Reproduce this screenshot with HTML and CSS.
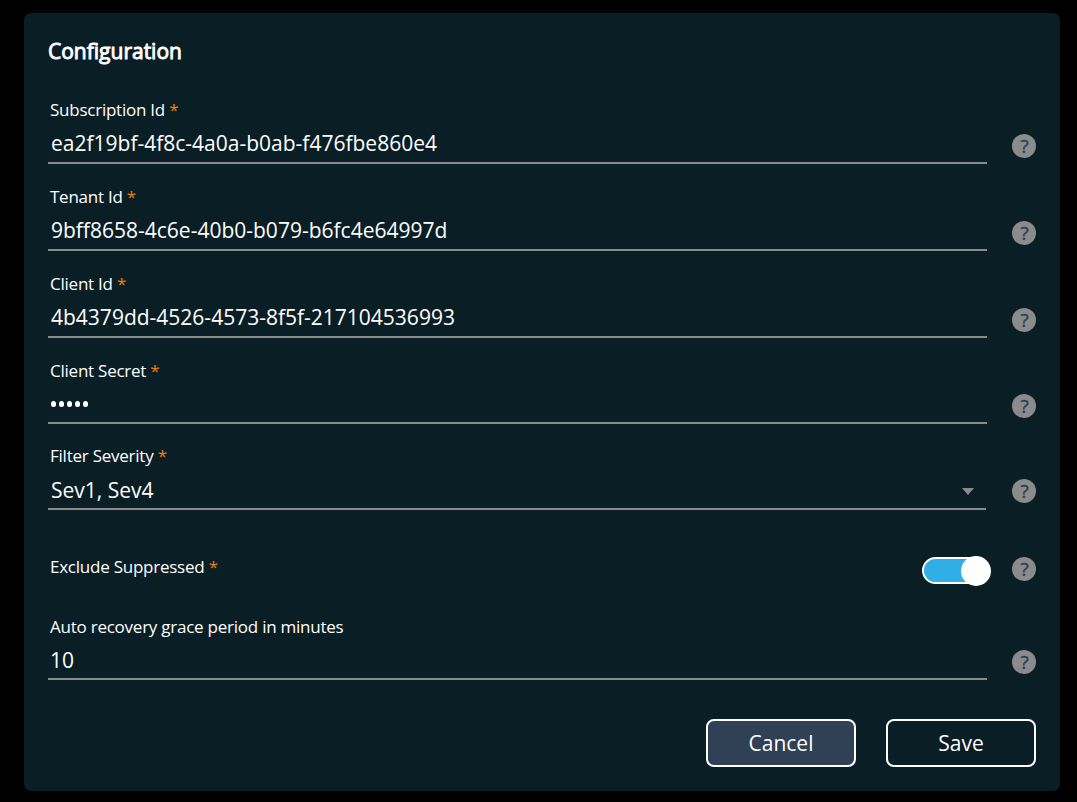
FILE: index.html
```html
<!DOCTYPE html>
<html lang="en">
<head>
<meta charset="utf-8">
<title>Configuration</title>
<link rel="stylesheet" href="styles.css">
</head>
<body>
<main class="card">
  <h1 class="title">Configuration</h1>
  <div class="row">
    <div class="field"><div class="label">Subscription Id <span class="req">*</span></div><div class="value">ea2f19bf-4f8c-4a0a-b0ab-f476fbe860e4</div></div>
    <span class="help">?</span>
  </div>
  <div class="row">
    <div class="field"><div class="label">Tenant Id <span class="req">*</span></div><div class="value">9bff8658-4c6e-40b0-b079-b6fc4e64997d</div></div>
    <span class="help">?</span>
  </div>
  <div class="row">
    <div class="field"><div class="label">Client Id <span class="req">*</span></div><div class="value">4b4379dd-4526-4573-8f5f-217104536993</div></div>
    <span class="help">?</span>
  </div>
  <div class="row row-secret">
    <div class="field"><div class="label">Client Secret <span class="req">*</span></div><div class="value secret"><i class="dot"></i><i class="dot"></i><i class="dot"></i><i class="dot"></i><i class="dot"></i></div></div>
    <span class="help">?</span>
  </div>
  <div class="row row-select">
    <div class="field"><div class="label">Filter Severity <span class="req">*</span></div><div class="value select"><span>Sev1, Sev4</span><svg class="caret" width="12" height="7" viewBox="0 0 12 7"><path d="M0 0H12L6 7Z" fill="#8b8b8b"/></svg></div></div>
    <span class="help">?</span>
  </div>
  <div class="row row-toggle">
    <div class="label">Exclude Suppressed <span class="req">*</span></div>
    <div class="toggle"><span class="track"></span><span class="knob"></span></div>
    <span class="help">?</span>
  </div>
  <div class="row row-grace">
    <div class="field"><div class="label">Auto recovery grace period in minutes</div><div class="value">10</div></div>
    <span class="help">?</span>
  </div>
  <div class="actions">
    <button class="btn cancel">Cancel</button>
    <button class="btn">Save</button>
  </div>
</main>
</body>
</html>
```

FILE: styles.css
```css
* { box-sizing: border-box; }
body {
  margin: 0;
  height: 802px;
  padding: 13px 17px 11px 24px;
  overflow: hidden;
  background: #000;
  color: #fff;
  font-family: "Open Sans", sans-serif;
}
.card {
  height: 778px;
  padding: 22px 24px 24px;
  border-radius: 7px;
  background: #0a1e26;
}
.title {
  margin: 0 0 30px;
  height: 32px;
  font-size: 21px;
  line-height: 32px;
  font-weight: 400;
  -webkit-text-stroke: 0.9px #fff;
}
.row {
  display: flex;
  align-items: flex-end;
  justify-content: space-between;
  height: 67px;
  margin-bottom: 20px;
}
.field {
  width: 939px;
  height: 100%;
  border-bottom: 2px solid #8b8b8b;
}
.label {
  padding: 1px 0 0 2px;
  font-size: 17px;
  line-height: 24px;
  letter-spacing: -0.24px;
  white-space: nowrap;
}
.req { color: #f08000; }
.value {
  margin-top: 6px;
  padding-left: 3px;
  height: 30px;
  font-size: 21px;
  line-height: 30px;
  white-space: nowrap;
}
.help {
  width: 24px;
  height: 24px;
  margin-bottom: 6px;
  padding-left: 1px;
  border-radius: 50%;
  background: #8b8b8b;
  color: #2f4058;
  font-size: 19px;
  -webkit-text-stroke: 0.4px #2f4058;
  line-height: 25px;
  text-align: center;
}
.row-secret { height: 66px; margin-bottom: 19px; }
.secret {
  display: flex;
  align-items: center;
  gap: 2.5px;
}
.dot {
  width: 5.5px;
  height: 5.5px;
  border-radius: 50%;
  background: #fff;
}
.row-select { margin-bottom: 44px; }
.row-select .field { width: 938px; }
.row-select .help { margin-bottom: 7px; }
.select {
  display: flex;
  align-items: center;
  justify-content: space-between;
  margin-top: 7px;
  padding-right: 12px;
}
.caret { margin-top: 2px; }
.row-toggle {
  align-items: flex-start;
  height: 32px;
  margin-bottom: 28px;
}
.toggle {
  display: flex;
  align-items: center;
  width: 69px;
  height: 30px;
  margin: 2px 21px 0 auto;
}
.track {
  width: 62px;
  height: 27px;
  margin-right: -23px;
  margin-bottom: 1px;
  border: 2px solid #fff;
  border-radius: 14px;
  background: #31aee6;
}
.knob {
  flex: none;
  width: 30px;
  height: 30px;
  border-radius: 50%;
  background: #fff;
}
.row-toggle .help { margin: 3px 0 0; }
.row-grace { height: 66px; margin-bottom: 39px; }
.row-grace .value { padding-left: 2px; }
.secret { padding-left: 2.5px; }
.actions {
  display: flex;
  justify-content: flex-end;
  gap: 30px;
}
.btn {
  width: 150px;
  height: 48px;
  padding: 0;
  border: 2px solid #fff;
  border-radius: 8px;
  background: transparent;
  color: #fff;
  font: 21px/44px "Open Sans", sans-serif;
}
.cancel { background: #304055; }
```
